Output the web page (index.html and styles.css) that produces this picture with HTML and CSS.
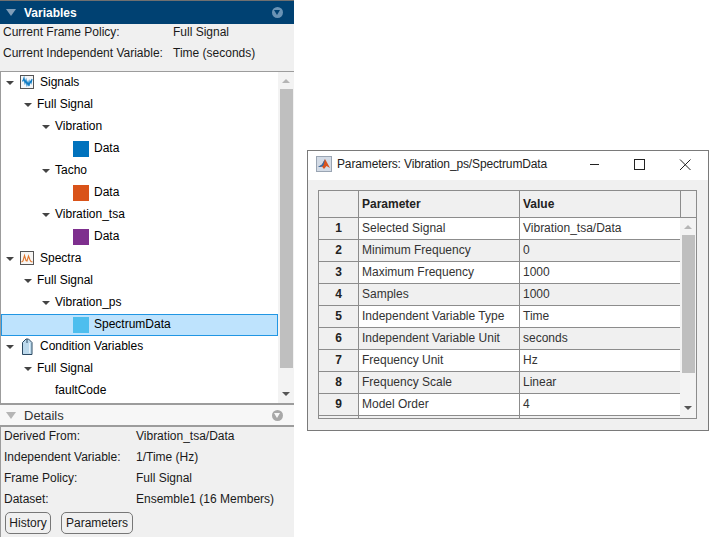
FILE: index.html
```html
<!DOCTYPE html>
<html lang="en">
  <head>
    <meta charset="UTF-8">
    <title>Variables</title>
    <link rel="stylesheet" href="styles.css">
  </head>
  <body>
    <div class="browser">
      <div class="panel-head panel-head-active">
        <span class="collapse"></span>
        <span class="panel-title">Variables</span>
        <span class="panel-menu"></span>
      </div>
      <div class="policy">
        <div class="policy-row"><span class="policy-label">Current Frame Policy:</span><span>Full Signal</span></div>
        <div class="policy-row"><span class="policy-label">Current Independent Variable:</span><span>Time (seconds)</span></div>
      </div>
      <div class="tree-wrap">
        <div class="tree">
          <div class="node"><span class="arrow a0"></span>
            <svg class="node-icon" width="14" height="14" viewBox="0 0 14 14"><rect x="0.5" y="0.5" width="13" height="13" fill="#f4f6f8" stroke="#555"/><path d="M2 6H3L4 3L5 8L6 5L7 10L8 7L9 11L10 6L11 8L12 4" fill="none" stroke="#0f7cc4" stroke-width="1.2"/></svg>
            <span class="node-text t-root">Signals</span></div>
          <div class="node"><span class="arrow a1"></span><span class="node-text t1">Full Signal</span></div>
          <div class="node"><span class="arrow a2"></span><span class="node-text t2">Vibration</span></div>
          <div class="node"><span class="swatch blue"></span><span class="node-text">Data</span></div>
          <div class="node"><span class="arrow a2"></span><span class="node-text t2">Tacho</span></div>
          <div class="node"><span class="swatch orange"></span><span class="node-text">Data</span></div>
          <div class="node"><span class="arrow a2"></span><span class="node-text t2">Vibration_tsa</span></div>
          <div class="node"><span class="swatch purple"></span><span class="node-text">Data</span></div>
          <div class="node"><span class="arrow a0"></span>
            <svg class="node-icon" width="14" height="14" viewBox="0 0 14 14"><rect x="0.5" y="0.5" width="13" height="13" fill="#f8f6f4" stroke="#555"/><path d="M1.5 11L3 10L4.5 4.5L6 9.5L7 10L8.5 5L10 9L11 10.5L12.5 11" fill="none" stroke="#e2772c" stroke-width="1.1"/></svg>
            <span class="node-text t-root">Spectra</span></div>
          <div class="node"><span class="arrow a1"></span><span class="node-text t1">Full Signal</span></div>
          <div class="node"><span class="arrow a2"></span><span class="node-text t2">Vibration_ps</span></div>
          <div class="node node-selected"><span class="swatch sky"></span><span class="node-text">SpectrumData</span></div>
          <div class="node"><span class="arrow a0"></span>
            <svg class="node-icon" width="14" height="17" viewBox="0 0 14 17"><path d="M2.5 16.5V4.5L6 1H8.5L12 4.5V16.5Z" fill="#bcd9ec" stroke="#2c4a63"/><path d="M7 1V5" stroke="#2c4a63"/><path d="M9.5 5V15" stroke="#e6f2fa"/></svg>
            <span class="node-text t-root">Condition Variables</span></div>
          <div class="node"><span class="arrow a1"></span><span class="node-text t1">Full Signal</span></div>
          <div class="node"><span class="node-text t2">faultCode</span></div>
        </div>
        <div class="vscroll tree-scroll">
          <span class="up"></span>
          <span class="thumb"></span>
          <span class="down"></span>
        </div>
      </div>
      <div class="panel-head panel-head-idle">
        <span class="collapse"></span>
        <span class="panel-title">Details</span>
        <span class="panel-menu"></span>
      </div>
      <div class="details">
        <div class="detail-row"><span class="detail-label">Derived From:</span><span>Vibration_tsa/Data</span></div>
        <div class="detail-row"><span class="detail-label">Independent Variable:</span><span>1/Time (Hz)</span></div>
        <div class="detail-row"><span class="detail-label">Frame Policy:</span><span>Full Signal</span></div>
        <div class="detail-row"><span class="detail-label">Dataset:</span><span>Ensemble1 (16 Members)</span></div>
        <div class="detail-buttons">
          <button class="btn btn-history">History</button>
          <button class="btn btn-params">Parameters</button>
        </div>
      </div>
    </div>

    <div class="window">
      <div class="titlebar">
        <svg class="app-icon" width="16" height="16" viewBox="0 0 16 16"><rect x="0.5" y="0.5" width="15" height="15" fill="#d3dbe6" stroke="#9aa5b3"/><path d="M2 11L6 8.5L9 3L11 6.5L14 12L10.5 10L8 13L6 10.5Z" fill="#d9541e"/><path d="M2 11L6 8.5L9 3L7.5 9L6 10.5L4 11Z" fill="#2a6fb0"/></svg>
        <span class="win-title">Parameters: Vibration_ps/SpectrumData</span>
        <span class="win-buttons">
          <svg width="46" height="28" viewBox="0 0 46 28"><path d="M20 14.5H29" stroke="#222"/></svg>
          <svg width="46" height="28" viewBox="0 0 46 28"><rect x="18.5" y="9.5" width="10" height="10" fill="none" stroke="#222"/></svg>
          <svg width="46" height="28" viewBox="0 0 46 28"><path d="M18 9.5L28.5 20M28.5 9.5L18 20" stroke="#222"/></svg>
        </span>
      </div>
      <div class="win-body">
        <div class="grid">
          <div class="grid-head">
            <div class="cell cell-num"></div>
            <div class="cell">Parameter</div>
            <div class="cell">Value</div>
            <div class="cell cell-end"></div>
          </div>
          <div class="grid-main">
            <div class="grid-rows">
              <div class="row row-odd"><div class="cell cell-num">1</div><div class="cell">Selected Signal</div><div class="cell">Vibration_tsa/Data</div></div>
              <div class="row"><div class="cell cell-num">2</div><div class="cell">Minimum Frequency</div><div class="cell">0</div></div>
              <div class="row row-odd"><div class="cell cell-num">3</div><div class="cell">Maximum Frequency</div><div class="cell">1000</div></div>
              <div class="row"><div class="cell cell-num">4</div><div class="cell">Samples</div><div class="cell">1000</div></div>
              <div class="row row-odd"><div class="cell cell-num">5</div><div class="cell">Independent Variable Type</div><div class="cell">Time</div></div>
              <div class="row"><div class="cell cell-num">6</div><div class="cell">Independent Variable Unit</div><div class="cell">seconds</div></div>
              <div class="row row-odd"><div class="cell cell-num">7</div><div class="cell">Frequency Unit</div><div class="cell">Hz</div></div>
              <div class="row"><div class="cell cell-num">8</div><div class="cell">Frequency Scale</div><div class="cell">Linear</div></div>
              <div class="row row-odd"><div class="cell cell-num">9</div><div class="cell">Model Order</div><div class="cell">4</div></div>
              <div class="row"><div class="cell cell-num"></div><div class="cell"></div><div class="cell"></div></div>
            </div>
            <div class="vscroll grid-scroll">
              <span class="up"></span>
              <span class="thumb"></span>
              <span class="down"></span>
            </div>
          </div>
        </div>
      </div>
    </div>
  </body>
</html>
```

FILE: styles.css
```css
body {
  margin: 0;
  height: 537px;
  overflow: hidden;
  background-color: #ffffff;
  font-family: "Liberation Sans", Arial, sans-serif;
  font-size: 12px;
  color: #1a1a1a;
  position: relative;
}

/* left column */
.browser { width: 294px; height: 537px; display: flex; flex-direction: column; background-color: #f0f0f0; }
.panel-head { display: flex; align-items: center; flex: none; box-sizing: border-box; }
.panel-head-active { height: 24px; background-color: #004172; border-top: 1px solid #707070; color: #ffffff; font-weight: bold; }
.panel-head-idle { height: 24px; background-color: #f7f7f7; border-top: 2px solid #9c9c9c; border-bottom: 2px solid #9c9c9c; color: #333; }
.panel-head-idle .panel-title { font-size: 13px; }
.panel-title { flex: 1; margin-left: 8px; }
.collapse { width: 0; height: 0; margin-left: 6px; border-left: 5px solid transparent; border-right: 5px solid transparent; border-top: 7px solid #7f9db8; }
.panel-head-idle .collapse { border-top-color: #b5b5b5; }
.panel-menu { width: 11px; height: 11px; border-radius: 50%; margin-right: 11px; background-color: #6a93b5; position: relative; }
.panel-menu::after { content: ""; position: absolute; left: 2px; top: 3px; border-left: 3.5px solid transparent; border-right: 3.5px solid transparent; border-top: 5px solid #004172; }
.panel-head-idle .panel-menu { background-color: #a8a8a8; }
.panel-head-idle .panel-menu::after { border-top-color: #f7f7f7; }

.policy { height: 47px; flex: none; background-color: #f0f0f0; border-bottom: 1px solid #9c9c9c; }
.policy-row { display: flex; height: 21px; line-height: 17px; padding-left: 3px; }
.policy-label { width: 170px; }

.tree-wrap { flex: none; height: 331px; display: flex; background-color: #ffffff; border-left: 1px solid #9c9c9c; overflow: hidden; }
.tree { width: 277px; }
.node { height: 22px; display: flex; align-items: center; box-sizing: border-box; color: #000; position: relative; }
.node-text { white-space: nowrap; padding-bottom: 2px; }
.arrow { position: absolute; top: 9px; width: 0; height: 0; border-left: 4px solid transparent; border-right: 4px solid transparent; border-top: 4px solid #444; }
.a0 { left: 5px; }
.a1 { left: 23px; }
.a2 { left: 41px; }
.node-icon { margin-left: 19px; margin-right: 5px; margin-bottom: 2px; flex: none; }
.t-root { margin-left: 1px; }
.t1 { margin-left: 36px; }
.t2 { margin-left: 54px; }
.swatch { width: 16px; height: 16px; margin-left: 72px; margin-right: 5px; flex: none; }
.blue { background-color: #0072bd; }
.orange { background-color: #d95319; }
.purple { background-color: #7e2f8e; }
.sky { background-color: #4dbeee; }
.node-selected { background-color: #bee3fd; border: 1px solid #2196e3; }
.node-selected .swatch { margin-left: 71px; }

.vscroll { background-color: #f3f3f3; position: relative; flex: none; }
.tree-scroll { width: 16px; }
.vscroll .up, .vscroll .down { position: absolute; left: 4px; width: 0; height: 0; border-left: 4px solid transparent; border-right: 4px solid transparent; }
.vscroll .up { border-bottom: 4px solid #b5b5b5; }
.vscroll .down { border-top: 4px solid #555; }
.vscroll .thumb { position: absolute; left: 2px; width: 13px; background-color: #bfbfbf; }
.tree-scroll .up { top: 7px; }
.tree-scroll .thumb { top: 17px; height: 279px; }
.tree-scroll .down { top: 320px; }

.details { flex: 1; padding-left: 4px; background-color: #f0f0f0; border-left: 1px solid #9c9c9c; }
.detail-row { display: flex; height: 21px; line-height: 19px; margin-left: -1px; }
.detail-label { width: 132px; }
.detail-buttons { display: flex; gap: 10px; padding-top: 1px; }
.btn { height: 22px; padding: 0; font-family: inherit; font-size: 12px; color: #1a1a1a; background-color: #f0f0f0; border: 1px solid #777; border-radius: 5px; }
.btn-history { width: 46px; }
.btn-params { width: 72px; }

/* floating figure window */
.window { position: absolute; left: 307px; top: 150px; width: 402px; height: 281px; box-sizing: border-box; border: 1px solid #7a7a7a; display: flex; flex-direction: column; background-color: #f0f0f0; }
.titlebar { height: 29px; box-sizing: border-box; padding-bottom: 3px; flex: none; display: flex; align-items: center; background-color: #ffffff; }
.app-icon { margin-left: 8px; margin-right: 5px; }
.win-title { flex: 1; color: #222; white-space: nowrap; letter-spacing: -0.14px; }
.win-buttons { display: flex; }
.win-buttons svg { display: block; }
.win-body { flex: 1; padding: 10px 11px 12px 10px; }
.grid { height: 229px; box-sizing: border-box; border: 1px solid #8c8c8c; display: flex; flex-direction: column; overflow: hidden; }
.grid-head { height: 26px; flex: none; display: grid; grid-template-columns: 40px 161px 161px 17px; background-color: #f0f0f0; font-weight: bold; border-bottom: 1px solid #8c8c8c; }
.grid-main { flex: 1; display: flex; overflow: hidden; }
.grid-rows { width: 361px; overflow: hidden; }
.row { height: 22px; box-sizing: border-box; display: grid; grid-template-columns: 40px 161px 161px; background-color: #f0f0f0; border-bottom: 1px solid #8c8c8c; }
.row-odd { background-color: #ffffff; }
.cell { padding-left: 3px; line-height: 21px; color: #333; border-right: 1px solid #8c8c8c; white-space: nowrap; overflow: hidden; }
.grid-head .cell { line-height: 26px; color: #222; }
.cell-num { padding: 0; text-align: center; font-weight: bold; background-color: #f0f0f0; color: #222; }
.cell-end { border-right: none; }
.grid-scroll { flex: 1; }
.grid-scroll .thumb { top: 17px; height: 138px; left: 2px; }
.grid-scroll .up { top: 7px; left: 4px; }
.grid-scroll .down { top: 188px; left: 4px; }
```
